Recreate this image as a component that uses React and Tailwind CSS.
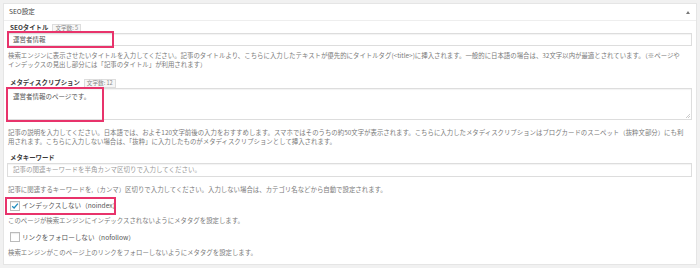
import { useState } from 'react'

const jp = { fontFamily: '"Noto Sans CJK JP", "Noto Sans", sans-serif' }

function Label({ children, count }) {
  return (
    <div className="flex items-center h-[10px] pl-[3px] gap-[4px]">
      <span className="text-[6.4px] font-bold text-[#3a3a3a] leading-none">{children}</span>
      {count !== undefined && (
        <span className="h-[9px] px-[2px] border border-[#ddd] bg-[#f6f6f6] text-[5.6px] text-[#888] leading-[7px]">
          文字数: {count}
        </span>
      )}
    </div>
  )
}

function Desc({ lines, className = '' }) {
  return (
    <div className={`pl-[1px] text-[6.42px] leading-[9px] text-[#7a7a7a] ${className}`}>
      {lines.map((l, i) => <div key={i} className="whitespace-nowrap h-[9px]">{l}</div>)}
    </div>
  )
}

function Check({ checked, onChange, children }) {
  return (
    <label className="flex items-center gap-[2px] pl-[3px] cursor-pointer">
      <span
        onClick={onChange}
        className="w-[10px] h-[10px] border border-[#bbb] bg-white flex items-center justify-center shadow-[inset_0_1px_1px_rgba(0,0,0,0.08)]">
        {checked && (
          <svg width="8" height="8" viewBox="0 0 8 8">
            <path d="M1.2 4.2 L3.1 6 L6.9 1.6" fill="none" stroke="#1e8cbe" strokeWidth="1.3" />
          </svg>
        )}
      </span>
      <span className="text-[6.6px] text-[#555] leading-none">{children}</span>
    </label>
  )
}

export default function App() {
  const [noindex, setNoindex] = useState(true)
  const [nofollow, setNofollow] = useState(false)

  return (
    <div className="relative w-[700px] h-[268px] bg-[#f1f1f1] pt-[3px] px-[3px] overflow-hidden" style={jp}>
      <div className="bg-white border border-[#e5e5e5] h-[262px]">
        {/* Header */}
        <div className="h-[17px] flex items-center justify-between pl-[5px] pr-[6px] border-b border-[#eee]">
          <span className="text-[6.6px] text-[#444]">SEO設定</span>
          <svg width="4" height="3" viewBox="0 0 4 3"><path d="M0 3 L2 0 L4 3 Z" fill="#777" /></svg>
        </div>

        <div className="pl-[3px] pr-[4px]">
          {/* SEO title */}
          <div className="mt-[2px]"><Label count={5}>SEOタイトル</Label></div>
          <div className="h-[13px] border border-[#ddd] shadow-[inset_0_1px_1px_rgba(0,0,0,0.05)] flex items-center pl-[5px] text-[6.5px] text-[#555]">
            運営者情報
          </div>
          <Desc className="mt-[5px]" lines={[
            '検索エンジンに表示させたいタイトルを入力してください。記事のタイトルより、こちらに入力したテキストが優先的にタイトルタグ(<title>)に挿入されます。一般的に日本語の場合は、32文字以内が最適とされています。（※ページや',
            'インデックスの見出し部分には「記事のタイトル」が利用されます）',
          ]} />

          {/* Meta description */}
          <div className="mt-[9px]"><Label count={12}>メタディスクリプション</Label></div>
          <div className="relative h-[32px] border border-[#ddd] shadow-[inset_0_1px_1px_rgba(0,0,0,0.05)] pl-[5px] pt-[3px] text-[6.5px] text-[#555] leading-[9px]">
            運営者情報のページです。
            <svg className="absolute right-[1px] bottom-[1px]" width="5" height="5" viewBox="0 0 5 5">
              <path d="M1 5 L5 1 M3 5 L5 3" stroke="#aaa" strokeWidth="0.6" />
            </svg>
          </div>
          <Desc className="mt-[8px]" lines={[
            '記事の説明を入力してください。日本語では、およそ120文字前後の入力をおすすめします。スマホではそのうちの約50文字が表示されます。こちらに入力したメタディスクリプションはブログカードのスニペット（抜粋文部分）にも利',
            '用されます。こちらに入力しない場合は、「抜粋」に入力したものがメタディスクリプションとして挿入されます。',
          ]} />

          {/* Meta keywords */}
          <div className="mt-[7px]"><Label>メタキーワード</Label></div>
          <div className="h-[14px] border border-[#ddd] shadow-[inset_0_1px_1px_rgba(0,0,0,0.05)] flex items-center pl-[5px] text-[6.5px] text-[#999]">
            記事の関連キーワードを半角カンマ区切りで入力してください。
          </div>
          <Desc className="mt-[8px]" lines={[
            '記事に関連するキーワードを,（カンマ）区切りで入力してください。入力しない場合は、カテゴリ名などから自動で設定されます。',
          ]} />

          {/* Robots */}
          <div className="mt-[3px] h-[17px] flex items-center">
            <Check checked={noindex} onChange={() => setNoindex(v => !v)}>インデックスしない（noindex）</Check>
          </div>
          <Desc className="mt-[2px]" lines={['このページが検索エンジンにインデックスされないようにメタタグを設定します。']} />
          <div className="mt-[4px] h-[16px] flex items-center">
            <Check checked={nofollow} onChange={() => setNofollow(v => !v)}>リンクをフォローしない（nofollow）</Check>
          </div>
          <Desc className="mt-[3px]" lines={['検索エンジンがこのページ上のリンクをフォローしないようにメタタグを設定します。']} />
        </div>
      </div>

      {/* Highlight annotations */}
      <div className="absolute left-[7px] top-[31px] w-[107px] h-[17px] border-2 border-[#e8336b] pointer-events-none" />
      <div className="absolute left-[6px] top-[87px] w-[98px] h-[35px] border-2 border-[#e8336b] pointer-events-none" />
      <div className="absolute left-[5px] top-[197px] w-[111px] h-[18px] border-2 border-[#e8336b] pointer-events-none" />
    </div>
  )
}
